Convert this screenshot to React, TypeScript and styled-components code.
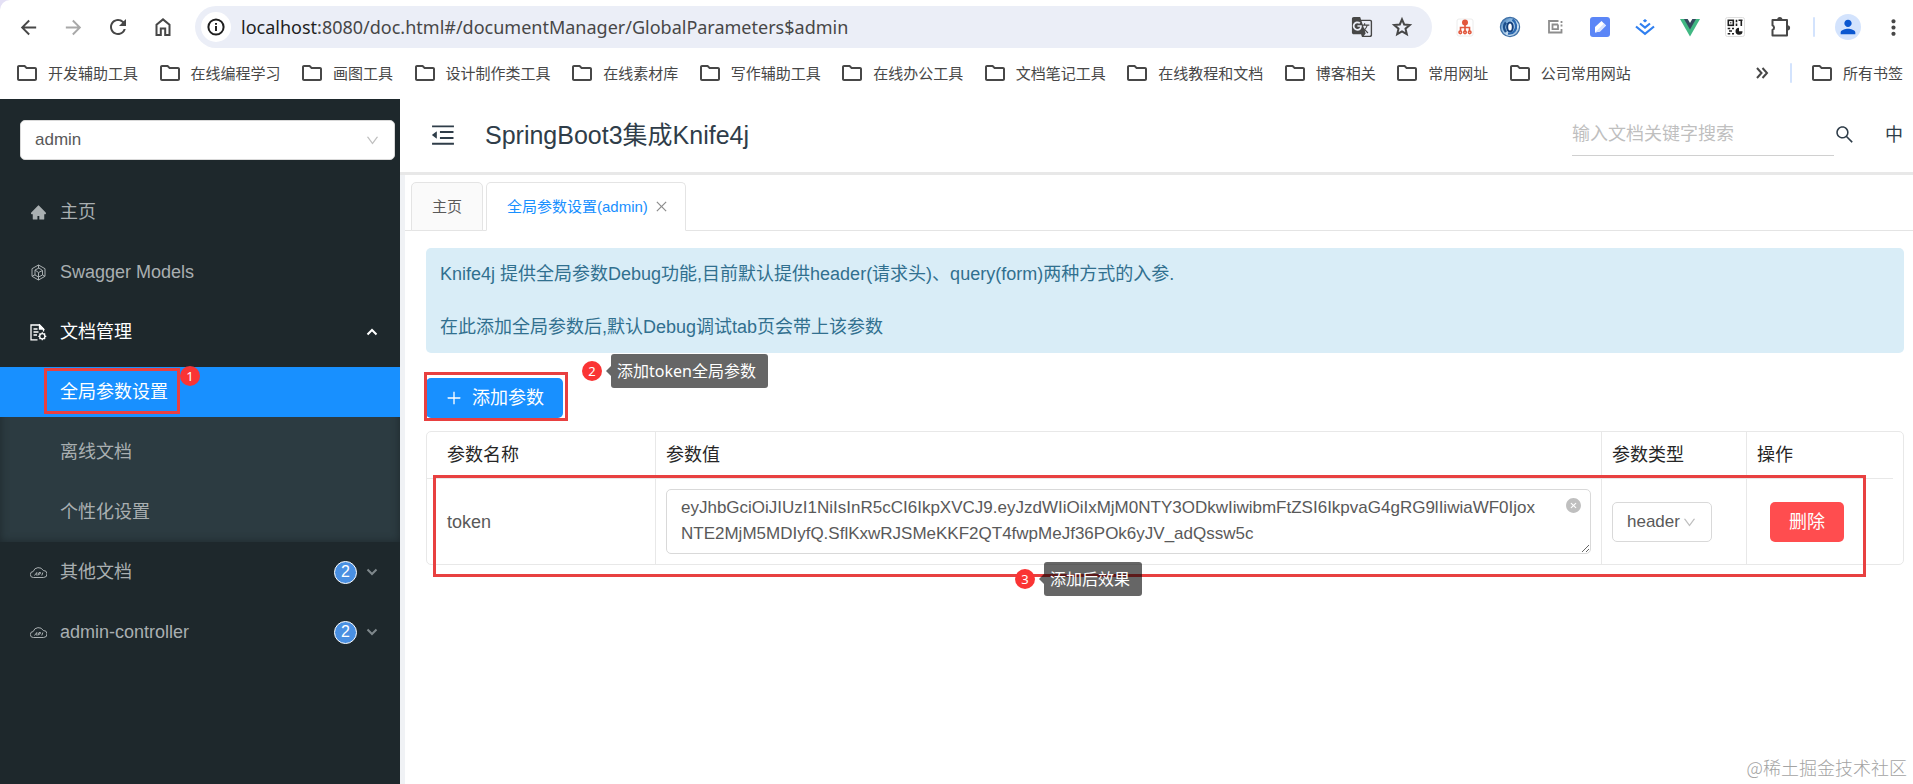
import React from "react";
import styled, { createGlobalStyle } from "styled-components";
import {
  MdArrowBack,
  MdArrowForward,
  MdRefresh,
  MdGTranslate,
  MdMoreVert,
  MdPerson,
  MdOutlineFolder,
} from "react-icons/md";
import {
  AiFillHome,
  AiOutlineMenuFold,
  AiOutlineSearch,
  AiOutlineDown,
  AiOutlineClose,
  AiOutlinePlus,
  AiFillCloseCircle,
} from "react-icons/ai";

const sans = `"Liberation Sans", "Noto Sans CJK SC", sans-serif`;
const uiSans = `"Noto Sans", "Noto Sans CJK SC", sans-serif`;

const GlobalStyle = createGlobalStyle`
  * { box-sizing: border-box; }
  body {
    margin: 0;
    background: #fff;
    font-family: ${sans};
    font-size: 18px;
    line-height: 26px;
    color: #595959;
  }
  button, select, input, textarea {
    font-family: inherit;
    font-size: inherit;
    line-height: inherit;
    color: inherit;
  }
  button { border: 0; padding: 0; margin: 0; background: none; cursor: pointer; }
  a { color: inherit; text-decoration: none; }
  svg { display: block; flex: none; }
`;

const Page = styled.div`
  display: flex;
  flex-direction: column;
  min-height: 100vh;
`;

/* ---------- browser frame ---------- */

const Chrome = styled.header`
  background: #e4e0f5;
  flex: none;
`;

const ChromeInner = styled.div`
  background: #fff;
  border-top-left-radius: 10px;
  color: #474747;
`;

const Toolbar = styled.div`
  display: flex;
  align-items: center;
  height: 54px;
  padding: 0 8px 0 16px;
`;

const NavButtons = styled.div`
  display: flex;
  gap: 21px;
  margin-right: 20px;
`;

const IconButton = styled.button<{ $muted?: boolean; $size?: number }>`
  display: flex;
  align-items: center;
  justify-content: center;
  width: ${(p) => p.$size ?? 24}px;
  height: ${(p) => p.$size ?? 24}px;
  color: ${(p) => (p.$muted ? "#a8a8a8" : "inherit")};
`;

const Omnibox = styled.div`
  display: flex;
  align-items: center;
  flex: 1;
  min-width: 0;
  height: 42px;
  padding: 0 18px 0 6px;
  border-radius: 21px;
  background: #ebeef7;
`;

const SiteInfo = styled.button`
  display: flex;
  align-items: center;
  justify-content: center;
  width: 30px;
  height: 30px;
  border-radius: 50%;
  background: #fff;
  color: #1f1f1f;
`;

const Url = styled.div`
  flex: 1;
  min-width: 0;
  margin-left: 10px;
  overflow: hidden;
  white-space: nowrap;
  font-family: ${uiSans};
  b { font-weight: 400; color: #1f1f1f; }
`;

const OmniActions = styled.div`
  display: flex;
  gap: 16px;
`;

const Extensions = styled.div`
  display: flex;
  align-items: center;
  gap: 21px;
  margin-left: 21px;
`;

const Divider = styled.span`
  width: 2px;
  height: 20px;
  border-radius: 1px;
  background: #d3e3fd;
`;

const Profile = styled.button`
  display: flex;
  align-items: center;
  justify-content: center;
  width: 26px;
  height: 26px;
  margin: 0 20px;
  border-radius: 50%;
  background: #d3e3fd;
  color: #0b57d0;
`;

const BookmarkBar = styled.nav`
  display: flex;
  align-items: center;
  justify-content: space-between;
  height: 45px;
  padding: 0 10px 7px 15px;
`;

const BookmarkList = styled.div`
  display: flex;
  justify-content: space-between;
  flex: 0 1 1616px;
  min-width: 0;
`;

const Bookmark = styled.a`
  display: flex;
  align-items: center;
  gap: 9px;
  flex: none;
  white-space: nowrap;
  font-family: ${uiSans};
  font-size: 15px;
  line-height: 24px;
`;

const BookmarkEnd = styled.div`
  display: flex;
  align-items: center;
  gap: 18px;
`;

/* ---------- application shell ---------- */

const Shell = styled.div`
  display: flex;
  flex: 1;
`;

const Sidebar = styled.aside`
  width: 400px;
  flex: none;
  background: #1e282c;
  color: #a9afb1;
`;

const SelectBox = styled.div<{ $compact?: boolean }>`
  position: relative;
  width: ${(p) => (p.$compact ? "100px" : "auto")};
  margin: ${(p) => (p.$compact ? "0" : "21px 5px 27px 20px")};
  color: #595959;
  select {
    display: block;
    width: 100%;
    height: 40px;
    padding: 0 14px;
    border: 1px solid #d9d9d9;
    border-radius: 5px;
    background: #fff;
    appearance: none;
    font-size: 17px;
  }
  svg {
    position: absolute;
    top: 13px;
    right: 15px;
    color: #bfbfbf;
    pointer-events: none;
  }
`;

const Menu = styled.nav`
  display: flex;
  flex-direction: column;
  gap: 10px;
`;

const MenuItem = styled.a<{ $open?: boolean }>`
  display: flex;
  align-items: center;
  height: 50px;
  padding: 0 21px 0 30px;
  color: ${(p) => (p.$open ? "#fff" : "inherit")};
`;

const MenuLabel = styled.span`
  flex: 1;
  margin-left: 13px;
`;

const Count = styled.span`
  display: flex;
  align-items: center;
  justify-content: center;
  width: 23px;
  height: 23px;
  margin-right: 8px;
  border: 1px solid #fff;
  border-radius: 50%;
  background: #4a90e2;
  color: #fff;
  font-size: 16px;
`;

const SubMenu = styled.div`
  display: flex;
  flex-direction: column;
  gap: 10px;
  margin-bottom: -5px;
  padding-bottom: 5px;
  background: #2c3b41;
  box-shadow: inset 0 0 8px #1e282c;
`;

const SubItem = styled.a<{ $active?: boolean }>`
  display: flex;
  align-items: center;
  height: 50px;
  padding-left: 60px;
  background: ${(p) => (p.$active ? "#1890ff" : "transparent")};
  color: ${(p) => (p.$active ? "#fff" : "inherit")};
`;

const Main = styled.main`
  flex: 1;
  min-width: 0;
  display: flex;
  flex-direction: column;
`;

const TopBar = styled.div`
  display: flex;
  align-items: center;
  height: 76px;
  padding: 0 10px 2px 29px;
  border-bottom: 3px solid #e8e8e8;
  color: #2f3d49;
`;

const Title = styled.h1`
  flex: 1;
  margin: 0 0 0 28px;
  font-size: 25px;
  line-height: 36px;
  font-weight: 400;
`;

const SearchInput = styled.input`
  width: 262px;
  height: 42px;
  padding: 0;
  border: 0;
  border-bottom: 1px solid #d0d0d0;
  background: none;
  outline: 0;
  &::placeholder { color: #bfbfbf; opacity: 1; }
`;

const LangButton = styled.button`
  margin-left: 30px;
`;

const Workspace = styled.div`
  flex: 1;
  position: relative;
  border-left: 5px solid #f0f2f5;
`;

const Tabs = styled.div`
  display: flex;
  gap: 3px;
  margin-top: 7px;
  padding-left: 6px;
  box-shadow: inset 0 -1px #e4e4e4;
`;

const Tab = styled.button<{ $active?: boolean }>`
  display: flex;
  align-items: center;
  gap: 6px;
  height: 49px;
  padding: 0 ${(p) => (p.$active ? 16 : 20)}px 0 20px;
  border: 1px solid #e4e4e4;
  border-bottom-color: ${(p) => (p.$active ? "#fff" : "#e4e4e4")};
  border-radius: 5px 5px 0 0;
  background: ${(p) => (p.$active ? "#fff" : "#fafafa")};
  color: ${(p) => (p.$active ? "#1890ff" : "#595959")};
  font-size: 15px;
  svg { color: #8c8c8c; }
`;

const Content = styled.section`
  padding: 17px 9px 0 21px;
`;

const Notice = styled.div`
  padding: 13px 14px;
  border-radius: 5px;
  background: #d9edf7;
  color: #31708f;
  p { margin: 0; }
  p + p { margin-top: 27px; }
`;

const Actions = styled.div`
  position: relative;
  width: fit-content;
  margin: 25px 0 13px;
`;

const SolidButton = styled.button<{ $danger?: boolean }>`
  display: flex;
  align-items: center;
  justify-content: center;
  gap: 9px;
  height: 40px;
  padding: 0 19px;
  border-radius: 5px;
  background: ${(p) => (p.$danger ? "#ff4d4f" : "#1890ff")};
  color: #fff;
`;

const TableBox = styled.div`
  position: relative;
  padding-right: 10px;
  border: 1px solid #e8e8e8;
  border-radius: 5px;
`;

const Table = styled.table`
  width: 100%;
  table-layout: fixed;
  border-spacing: 0;
  th {
    height: 47px;
    padding: 0 10px;
    border-bottom: 1px solid #e8e8e8;
    text-align: left;
    font-weight: 400;
    color: #262626;
  }
  td { padding: 10px; height: 85px; }
  th + th, td + td { border-left: 1px solid #e8e8e8; }
  th:first-child, td:first-child { padding-left: 20px; }
  td:last-child { padding-left: 23px; }
`;

const Col = styled.col<{ $w?: number }>`
  width: ${(p) => (p.$w ? `${p.$w}px` : "auto")};
`;

const TextAreaBox = styled.div`
  position: relative;
  textarea {
    display: block;
    width: 100%;
    height: 65px;
    padding: 5px 28px 5px 14px;
    border: 1px solid #d9d9d9;
    border-radius: 5px;
    outline: 0;
    resize: vertical;
    overflow: hidden;
    font-size: 17px;
    word-break: break-all;
  }
`;

const ClearButton = styled.button`
  position: absolute;
  top: 8px;
  right: 9px;
  color: #bfbfbf;
`;

const Watermark = styled.footer`
  position: absolute;
  right: 6px;
  bottom: 4px;
  font-family: "Noto Sans CJK SC", sans-serif;
  font-weight: 300;
  color: #a3a3a3;
`;

/* ---------- walkthrough marks ---------- */

const Mark = styled.span<{ $inset: string }>`
  position: absolute;
  inset: ${(p) => p.$inset};
  border: 3px solid #e84040;
  pointer-events: none;
`;

const MarkedText = styled.span`
  position: relative;
`;

const Step = styled.span<{ $left: string; $top: number }>`
  position: absolute;
  left: ${(p) => p.$left};
  top: ${(p) => p.$top}px;
  display: flex;
  align-items: center;
  height: 34px;
  white-space: nowrap;
  pointer-events: none;
`;

const StepNumber = styled.span`
  width: 20px;
  height: 20px;
  border-radius: 50%;
  background: #fa3434;
  color: #fff;
  font-family: ${uiSans};
  font-size: 13px;
  line-height: 20px;
  text-align: center;
`;

const Tip = styled.span`
  position: relative;
  margin-left: 9px;
  padding: 0 12px 0 6px;
  border-radius: 3px;
  background: rgba(0, 0, 0, 0.6);
  color: #fff;
  font-family: ${uiSans};
  font-size: 16px;
  line-height: 34px;
  &::before {
    content: "";
    position: absolute;
    top: 12px;
    left: -5px;
    border: 5px solid transparent;
    border-left-width: 0;
    border-right-color: rgba(0, 0, 0, 0.6);
  }
`;

/* ---------- drawings ---------- */

const HomeOutline = () => (
  <svg width="24" height="24" viewBox="0 0 24 24" fill="none" stroke="currentColor" strokeWidth="2">
    <path d="M5.500 20V9.800L12 4.400l6.500 5.400V20h-4.300v-6.400H9.800V20z" />
  </svg>
);

const InfoIcon = () => (
  <svg width="20" height="20" viewBox="0 0 20 20" fill="none" stroke="currentColor" strokeWidth="2">
    <circle cx="10" cy="10" r="7.600" />
    <path d="M10 9v5M10 6v1.800" />
  </svg>
);

const StarIcon = () => (
  <svg width="24" height="24" viewBox="0 0 24 24" fill="none" stroke="currentColor" strokeWidth="2">
    <path d="M12 4.300l2.200 5.200 5.600.5-4.300 3.700 1.300 5.500-4.800-2.900-4.800 2.900 1.300-5.500L4.200 10l5.600-.5z" />
  </svg>
);

const SitemapIcon = () => (
  <svg width="24" height="24" viewBox="0 0 24 24">
    <rect x="4" y="4" width="16" height="17" rx="2" fill="#fff" stroke="#ececec" />
    <g fill="none" stroke="#e2583e" strokeWidth="1.6">
      <circle cx="12" cy="7.500" r="2.200" fill="#e2583e" />
      <path d="M12 9v8M7.500 16v-3.500h9V16" />
      <circle cx="7.300" cy="17.300" r="1.300" />
      <circle cx="12" cy="17.300" r="1.300" />
      <circle cx="16.700" cy="17.300" r="1.300" />
    </g>
  </svg>
);

const OrbIcon = () => (
  <svg width="24" height="24" viewBox="0 0 24 24">
    <defs>
      <linearGradient id="orb" x1="0" y1="0" x2="1" y2="1">
        <stop offset="0" stopColor="#2a66a8" />
        <stop offset=".35" stopColor="#8fbbe2" />
        <stop offset=".7" stopColor="#d8e8f6" />
        <stop offset="1" stopColor="#3b78b8" />
      </linearGradient>
    </defs>
    <circle cx="12" cy="12" r="9.600" fill="url(#orb)" stroke="#3d6fa6" strokeWidth="1.2" />
    <path d="M14.500 4.500c4 3 4.500 8 2 11.500-1.500 2-4 3-6.500 2.500" fill="none" stroke="#2a68b0" strokeWidth="2.4" />
    <path d="M8 17C5.500 14 5.500 10 8 7.500" fill="none" stroke="#1c4f8c" strokeWidth="2.600" />
    <ellipse cx="12" cy="12" rx="2.800" ry="4.600" fill="#fff" stroke="#123f7c" strokeWidth="2" />
  </svg>
);

const SpiralIcon = () => (
  <svg width="24" height="24" viewBox="0 0 24 24" fill="none" stroke="#8d8d8d" strokeWidth="1.8">
    <path d="M15.500 6H6v11.500h12.500V14M15 9.500H9.500v4.700H15V9.500M18.500 6v2M18.500 9.500v2" />
  </svg>
);

const PenIcon = () => (
  <svg width="24" height="24" viewBox="0 0 24 24">
    <rect x="2" y="2" width="20" height="20" rx="3" fill="#5b86f7" />
    <path d="M7 17.500v-5.500l6.500-6 4.500 4.500-6 6z" fill="#fff" />
    <path d="M7 17.500l5-1 6-6-2-2z" fill="#d8e3ff" />
  </svg>
);

const JuejinIcon = () => (
  <svg width="24" height="24" viewBox="0 0 24 24" fill="none" stroke="#2f7ff0" strokeWidth="2.2">
    <path d="M12 4l2.200 1.800L12 7.600 9.800 5.800z" fill="#2f7ff0" stroke="none" />
    <path d="M7 8.500l5 4 5-4M3 11.500l9 7.300 9-7.300" />
  </svg>
);

const VueIcon = () => (
  <svg width="24" height="24" viewBox="0 0 24 24">
    <path d="M2 4h20L12 21.500z" fill="#41b883" />
    <path d="M6 4h12l-6 10.500z" fill="#35495e" />
    <path d="M9.700 4h4.600L12 8z" fill="#fff" />
  </svg>
);

const QrIcon = () => (
  <svg width="24" height="24" viewBox="0 0 24 24">
    <rect x="2.500" y="2.500" width="19" height="19" rx="2" fill="#fff" stroke="#dedede" />
    <g fill="none" stroke="#1f1f1f" strokeWidth="1.6">
      <rect x="5.300" y="5.300" width="5" height="5" />
      <path d="M7.300 7.800h1M13.500 4.800v2.500M13.500 8.500v2.500M15.500 5.300h4M18.300 6v5M4.700 13.500h2.500M9 13.500h2M6 16h3M4.700 18.700h2.500M9 18.700h2" />
    </g>
    <path d="M16 12.800v3.400h3.500a3.500 3.500 0 1 1-3.500-3.400z" fill="#1f1f1f" />
  </svg>
);

const PuzzleIcon = () => (
  <svg width="24" height="24" viewBox="0 0 24 24">
    <path
      d="M4.500 5H19v15.500H4.500V15a2.500 2.500 0 0 0 0-4.600z"
      fill="none"
      stroke="currentColor"
      strokeWidth="2"
      strokeLinejoin="round"
    />
    <path d="M9.200 4.500a2.600 2.600 0 0 1 5.200 0zM19.500 10.200a2.600 2.600 0 0 1 0 5.200z" fill="currentColor" />
  </svg>
);

const MoreBookmarks = () => (
  <svg width="14" height="14" viewBox="0 0 14 14" fill="none" stroke="currentColor" strokeWidth="2">
    <path d="M2 2l4.500 5L2 12M7.500 2L12 7l-4.500 5" />
  </svg>
);

const ModelIcon = () => (
  <svg width="17" height="17" viewBox="0 0 17 17" fill="none" stroke="currentColor" strokeWidth="1">
    <path d="M8.500 1L15 4.700v7.600L8.500 16 2 12.300V4.700z" />
    <path d="M8.500 1v3M2 12.300l3-1.500M15 12.300l-2.500-1.500M8.500 16v-3M5 6l4-2 3.500 2.500V11l-4 2-3.500-2zM5 6l3.500 2.500 4-2M8.500 8.500V13" />
  </svg>
);

const DocGearIcon = () => (
  <svg width="17" height="17" viewBox="0 0 17 17" fill="none" stroke="currentColor" strokeWidth="1.3">
    <path d="M7.500 15.800H1V1h8.500l4 4v2.500" />
    <path d="M9.500 1l4 4h-4z" fill="currentColor" />
    <path d="M3.500 5h4M3.500 8h5M3.500 11h3.500" />
    <circle cx="12.300" cy="12.300" r="2.600" />
    <path d="M12.300 8.300v1.300M12.300 15v1.300M8.300 12.300h1.300M15 12.300h1.300M9.500 9.500l.9.900M14.200 14.200l.9.900M15.100 9.500l-.9.900M10.400 14.200l-.9.900" />
  </svg>
);

const ApiCloudIcon = () => (
  <svg width="17" height="17" viewBox="0 0 17 17" fill="none" stroke="currentColor" strokeWidth="1">
    <path d="M3.500 13.500a3 3 0 0 1-.3-6A5.500 5.500 0 0 1 13.300 6.500a3.500 3.500 0 0 1 .4 7z" />
    <path d="M4.500 11.500l2.300-3v3M8 11.500l1-3h1.500l-.5 1.600H8.800M11.800 11.500l1-3" />
  </svg>
);

const Caret = ({ up }: { up?: boolean }) => (
  <svg
    width="14"
    height="14"
    viewBox="0 0 14 14"
    fill="none"
    stroke={up ? "#fff" : "#7e878b"}
    strokeWidth="2"
  >
    <path d={up ? "M2.500 9.500L7 5l4.500 4.500" : "M2.500 4.500L7 9l4.500-4.500"} />
  </svg>
);

/* ---------- data ---------- */

const bookmarks = [
  "开发辅助工具",
  "在线编程学习",
  "画图工具",
  "设计制作类工具",
  "在线素材库",
  "写作辅助工具",
  "在线办公工具",
  "文档笔记工具",
  "在线教程和文档",
  "博客相关",
  "常用网址",
  "公司常用网站",
];

const extensions = [
  { name: "站点地图", Icon: SitemapIcon },
  { name: "浏览助手", Icon: OrbIcon },
  { name: "页面工具", Icon: SpiralIcon },
  { name: "笔记", Icon: PenIcon },
  { name: "掘金", Icon: JuejinIcon },
  { name: "Vue", Icon: VueIcon },
  { name: "二维码", Icon: QrIcon },
  { name: "扩展程序", Icon: PuzzleIcon },
];

const token =
  "eyJhbGciOiJIUzI1NiIsInR5cCI6IkpXVCJ9.eyJzdWIiOiIxMjM0NTY3ODkwIiwibmFtZSI6IkpvaG4gRG9lIiwiaWF0Ijox\nNTE2MjM5MDIyfQ.SflKxwRJSMeKKF2QT4fwpMeJf36POk6yJV_adQssw5c";

function BrowserFrame() {
  return (
    <Chrome>
      <ChromeInner>
        <Toolbar>
          <NavButtons>
            <IconButton aria-label="后退"><MdArrowBack size={23} /></IconButton>
            <IconButton aria-label="前进" $muted><MdArrowForward size={23} /></IconButton>
            <IconButton aria-label="刷新"><MdRefresh size={24} /></IconButton>
            <IconButton aria-label="主页"><HomeOutline /></IconButton>
          </NavButtons>
          <Omnibox>
            <SiteInfo aria-label="网站信息"><InfoIcon /></SiteInfo>
            <Url><b>localhost</b>:8080/doc.html#/documentManager/GlobalParameters$admin</Url>
            <OmniActions>
              <IconButton aria-label="翻译"><MdGTranslate size={22} /></IconButton>
              <IconButton aria-label="收藏"><StarIcon /></IconButton>
            </OmniActions>
          </Omnibox>
          <Extensions>
            {extensions.map(({ name, Icon }) => (
              <IconButton key={name} aria-label={name}><Icon /></IconButton>
            ))}
            <Divider />
          </Extensions>
          <Profile aria-label="用户"><MdPerson size={22} /></Profile>
          <IconButton aria-label="更多"><MdMoreVert size={25} /></IconButton>
        </Toolbar>
        <BookmarkBar>
          <BookmarkList>
            {bookmarks.map((name) => (
              <Bookmark key={name} href="#"><MdOutlineFolder size={24} />{name}</Bookmark>
            ))}
          </BookmarkList>
          <BookmarkEnd>
            <IconButton aria-label="更多书签" $size={20}><MoreBookmarks /></IconButton>
            <Divider />
            <Bookmark href="#"><MdOutlineFolder size={24} />所有书签</Bookmark>
          </BookmarkEnd>
        </BookmarkBar>
      </ChromeInner>
    </Chrome>
  );
}

function SideNav() {
  return (
    <Sidebar>
      <SelectBox>
        <select aria-label="分组" defaultValue="admin"><option>admin</option></select>
        <AiOutlineDown size={15} />
      </SelectBox>
      <Menu>
        <MenuItem href="#"><AiFillHome size={17} /><MenuLabel>主页</MenuLabel></MenuItem>
        <MenuItem href="#"><ModelIcon /><MenuLabel>Swagger Models</MenuLabel></MenuItem>
        <MenuItem href="#" $open><DocGearIcon /><MenuLabel>文档管理</MenuLabel><Caret up /></MenuItem>
        <SubMenu>
          <SubItem href="#" $active>
            <MarkedText>
              全局参数设置
              <Mark $inset="-11px -12px -9px -16px" />
              <Step $left="calc(100% + 12px)" $top={-20}><StepNumber>1</StepNumber></Step>
            </MarkedText>
          </SubItem>
          <SubItem href="#">离线文档</SubItem>
          <SubItem href="#">个性化设置</SubItem>
        </SubMenu>
        <MenuItem href="#"><ApiCloudIcon /><MenuLabel>其他文档</MenuLabel><Count>2</Count><Caret /></MenuItem>
        <MenuItem href="#"><ApiCloudIcon /><MenuLabel>admin-controller</MenuLabel><Count>2</Count><Caret /></MenuItem>
      </Menu>
    </Sidebar>
  );
}

function ParameterTable() {
  return (
    <TableBox>
      <Table>
        <colgroup><Col $w={228} /><Col /><Col $w={145} /><Col $w={147} /></colgroup>
        <thead>
          <tr><th>参数名称</th><th>参数值</th><th>参数类型</th><th>操作</th></tr>
        </thead>
        <tbody>
          <tr>
            <td>token</td>
            <td>
              <TextAreaBox>
                <textarea aria-label="参数值" spellCheck={false} defaultValue={token} />
                <ClearButton aria-label="清空"><AiFillCloseCircle size={17} /></ClearButton>
              </TextAreaBox>
            </td>
            <td>
              <SelectBox $compact>
                <select aria-label="参数类型" defaultValue="header"><option>header</option><option>query</option></select>
                <AiOutlineDown size={15} />
              </SelectBox>
            </td>
            <td><SolidButton $danger>删除</SolidButton></td>
          </tr>
        </tbody>
      </Table>
      <Mark $inset="43px 37px -13px 6px" />
      <Step $left="588px" $top={130}><StepNumber>3</StepNumber><Tip>添加后效果</Tip></Step>
    </TableBox>
  );
}

export default function App() {
  return (
    <Page>
      <GlobalStyle />
      <BrowserFrame />
      <Shell>
        <SideNav />
        <Main>
          <TopBar>
            <IconButton aria-label="收起菜单" $size={28}><AiOutlineMenuFold size={28} /></IconButton>
            <Title>SpringBoot3集成Knife4j</Title>
            <SearchInput aria-label="搜索" placeholder="输入文档关键字搜索" />
            <IconButton aria-label="搜索文档" $size={21}><AiOutlineSearch size={21} /></IconButton>
            <LangButton>中</LangButton>
          </TopBar>
          <Workspace>
            <Tabs role="tablist">
              <Tab role="tab">主页</Tab>
              <Tab role="tab" $active aria-selected>全局参数设置(admin)<AiOutlineClose size={15} /></Tab>
            </Tabs>
            <Content>
              <Notice>
                <p>Knife4j 提供全局参数Debug功能,目前默认提供header(请求头)、query(form)两种方式的入参.</p>
                <p>在此添加全局参数后,默认Debug调试tab页会带上该参数</p>
              </Notice>
              <Actions>
                <SolidButton><AiOutlinePlus size={18} />添加参数</SolidButton>
                <Mark $inset="-6px -5px -3px -2px" />
                <Step $left="156px" $top={-24}><StepNumber>2</StepNumber><Tip>添加token全局参数</Tip></Step>
              </Actions>
              <ParameterTable />
            </Content>
            <Watermark>@稀土掘金技术社区</Watermark>
          </Workspace>
        </Main>
      </Shell>
    </Page>
  );
}
